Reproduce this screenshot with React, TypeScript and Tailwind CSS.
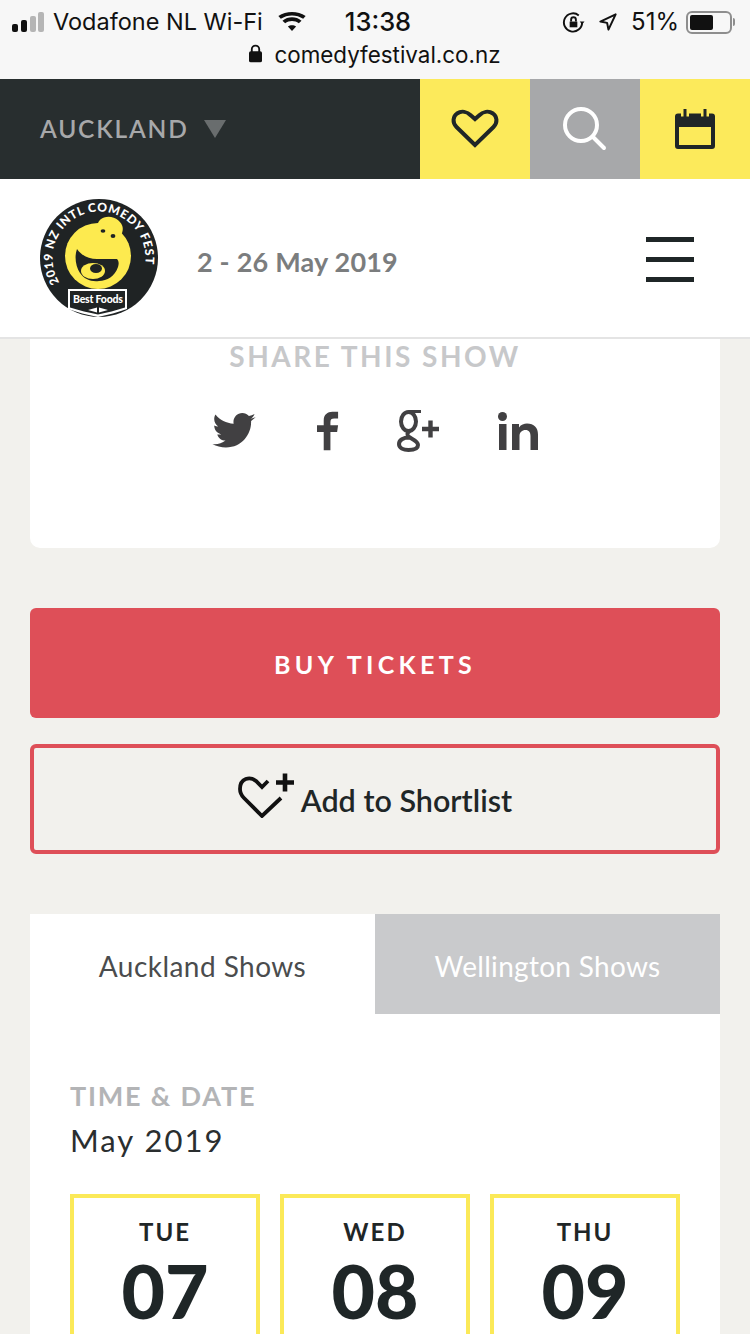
const sofia = { fontFamily: '"Lato", "Noto Sans", sans-serif' };

function Logo() {
  const yellow = "#fdea4f";
  const dark = "#1f2324";
  return (
    <svg width="120" height="120" viewBox="0 0 120 120" aria-hidden="true">
      <circle cx="60" cy="60" r="59" fill={dark} />
      <defs>
        <path id="logoArc" d="M 22.100 87 A 46.500 46.500 0 1 1 97.900 87" />
      </defs>
      <text fill="#fff" fontSize="12" fontWeight="900" letterSpacing="0.700" fontFamily="Lato, sans-serif">
        <textPath href="#logoArc" startOffset="3">2019 NZ INTL COMEDY FEST</textPath>
      </text>
      <circle cx="59" cy="58" r="33" fill={yellow} />
      <ellipse cx="71" cy="30" rx="13" ry="11" fill={yellow} transform="rotate(20 71 30)" />
      <ellipse cx="64" cy="33" rx="2.400" ry="1.800" fill={dark} />
      <ellipse cx="74" cy="38" rx="2.400" ry="2" fill={dark} />
      <path d="M38 51C43 58 50 61 58 61L78 61C80 63 80 66 79 69C76 78 68 83 60 83C52 84 45 81 41 75C37 69 35 59 38 51Z" fill={dark} />
      <ellipse cx="54" cy="73" rx="12" ry="8" fill={yellow} />
      <ellipse cx="57" cy="70.500" rx="6" ry="4.500" fill={dark} />
      <path d="M29 91h59v20c-9 3-19 6-29 8-11-2-21-5-30-8z" fill="#fff" />
      <path d="M31 93h55v16.500c-9 3-18 5-27 7-9-2-19-4-28-7z" fill={dark} />
      <text x="59" y="104.500" textAnchor="middle" fill="#fff" fontSize="10.500" fontWeight="900" fontFamily="Lato, sans-serif" textLength="50">Best Foods</text>
      <path d="M49 112l9-2.500v5zM69 112l-9-2.500v5z" fill="#fff" />
    </svg>
  );
}

function Twitter() {
  return (
    <svg width="44" height="36" viewBox="0 0 24 20" fill="#414042" aria-hidden="true">
      <path d="M24 2.400c-.9.400-1.800.600-2.800.800 1-.600 1.800-1.600 2.200-2.700-1 .600-2 1-3.100 1.200C19.300.700 18 0 16.600 0c-2.700 0-4.900 2.200-4.900 4.900 0 .400 0 .800.100 1.100C7.700 5.800 4.100 3.900 1.700.900c-.400.700-.700 1.600-.700 2.500 0 1.700.900 3.200 2.200 4.100-.800 0-1.600-.200-2.200-.600v.100c0 2.400 1.700 4.400 3.900 4.800-.400.100-.800.200-1.300.200-.300 0-.600 0-.900-.100.600 2 2.400 3.400 4.600 3.400-1.700 1.300-3.800 2.100-6.100 2.100-.400 0-.800 0-1.200-.100C2.200 18.300 4.800 19.100 7.500 19.100c9.100 0 14-7.500 14-14v-.600c1-.700 1.800-1.500 2.500-2.100z" />
    </svg>
  );
}

function GooglePlus() {
  return (
    <svg width="44" height="43" viewBox="0 0 44 43" aria-hidden="true" fill="none" stroke="#414042" strokeWidth="4">
      <path d="M24 2.500H12" strokeWidth="3" />
      <ellipse cx="11.500" cy="12.500" rx="7.500" ry="9.500" />
      <path d="M13 22c-3 1.500-3.500 4-1 6 3 2 9 4 9 8 0 3.500-4.500 5-9.500 5S2 39 2 35s4.500-6.500 10-6.500" />
      <path d="M25 20h17M33.500 11.500v17" strokeWidth="4.400" />
    </svg>
  );
}

function DateCard({ day, num }: { day: string; num: string }) {
  return (
    <div className="h-[180px] w-[190px] shrink-0 border-4 border-b-0 border-[#fbe958] pt-[19px] text-center text-[#1f2627]">
      <div className="text-[24px] leading-[30px] font-bold tracking-[2px]">{day}</div>
      <div className="mt-[5px] text-[75px] leading-[76px] font-black">{num}</div>
    </div>
  );
}

export default function App() {
  return (
    <div className="h-[1334px] w-[750px] overflow-hidden bg-[#f2f1ed]" style={sofia}>
      <div className="h-[79px] bg-[#f7f7f7] text-[#111]" style={{ fontFamily: 'Inter, sans-serif' }}>
        <div className="flex h-[42px] items-center pt-[2px] pl-[12px] text-[23.500px] leading-none">
          <svg width="34" height="20" viewBox="0 0 34 20" aria-hidden="true">
            <rect x="0" y="12" width="6" height="8" rx="2" fill="#111" />
            <rect x="9" y="8" width="6" height="12" rx="2" fill="#111" />
            <rect x="18" y="4" width="6" height="16" rx="2" fill="#b5b5b5" />
            <rect x="26" y="0" width="6" height="20" rx="2" fill="#b5b5b5" />
          </svg>
          <span className="ml-[7px] whitespace-nowrap">Vodafone NL Wi-Fi</span>
          <svg className="ml-[15px]" width="28" height="20" viewBox="0 0 30 22" aria-hidden="true">
            <path d="M15 21l-4.500-5c2.500-2 6.500-2 9 0zM7.500 12.500l-3-3c6-5 15-5 21 0l-3 3c-4.500-3.500-10.500-3.500-15 0zM2.700 7.500L0 4.500c8.500-6 21.500-6 30 0l-2.700 3C20 2.500 10 2.500 2.700 7.500z" fill="#111" />
          </svg>
          <span className="ml-[39px] text-[25.500px] font-medium">13:38</span>
          <div className="mr-[15px] ml-auto flex items-center">
            <svg className="mr-[-3px] ml-[-3px]" width="23" height="23" viewBox="0 0 24 24" fill="none" stroke="#111" strokeWidth="2" aria-hidden="true">
              <path d="M21 12a9.500 9.500 0 1 1-3.500-7.400" />
              <path d="M21 14l-2.500-3h5z" fill="#111" stroke="none" />
              <rect x="8" y="11" width="8" height="6" fill="#111" stroke="none" />
              <path d="M9.500 11V9a2.500 2.500 0 0 1 5 0v2" />
            </svg>
            <svg className="ml-[17px]" width="18" height="18" viewBox="0 0 20 20" fill="none" stroke="#111" strokeWidth="2.200" aria-hidden="true">
              <path d="M18.500 1.500 1.500 9.500l7.500 1.500 1.500 7.500z" strokeLinejoin="round" />
            </svg>
            <span className="ml-[14px] text-[24px]">51%</span>
            <div className="ml-[7px] flex h-[23px] w-[46px] items-center rounded-[6px] border-2 border-[#8e8e8e] p-[2px]">
              <div className="h-full w-[23px] rounded-[2px] bg-[#111]" />
            </div>
            <div className="ml-[1px] h-[8px] w-[2px] rounded-r bg-[#8e8e8e]" />
          </div>
        </div>
        <div className="flex h-[37px] items-start justify-center text-[22.400px] leading-[26px] text-[#111]">
          <svg className="mt-[2px] mr-[12px]" width="13" height="19" viewBox="0 0 14 19" aria-hidden="true">
            <rect x="0" y="7" width="14" height="12" rx="2" fill="#111" />
            <path d="M3 8V5a4 4 0 0 1 8 0v3" fill="none" stroke="#111" strokeWidth="2" />
          </svg>
          <span>comedyfestival.co.nz</span>
        </div>
      </div>

      <div className="flex h-[100px] bg-[#282e2f]">
        <div className="flex w-[420px] items-center pl-[40px]">
          <span className="text-[24.500px] font-semibold tracking-[1.800px] text-[#a7a8aa]">AUCKLAND</span>
          <svg className="ml-[15px]" width="22" height="18" viewBox="0 0 22 18" aria-hidden="true">
            <path d="M0 0h22L11 18z" fill="#696d6e" />
          </svg>
        </div>
        <div className="flex w-[110px] items-center justify-center bg-[#fcea5b]">
          <svg width="48" height="40" viewBox="0 0 48 40" fill="none" stroke="#1f2627" strokeWidth="4" aria-hidden="true">
            <path d="M24 36 5.500 18C1 13.500 2 7.500 6 4.500c4.500-3 10-2 14 2L24 10l4-3.500c4-4 9.500-5 14-2 4 3 5 9 .5 13.500z" />
          </svg>
        </div>
        <div className="flex w-[110px] items-center justify-center bg-[#a7a8aa]">
          <svg width="44" height="44" viewBox="0 0 44 44" fill="none" stroke="#fff" aria-hidden="true">
            <circle cx="18" cy="18" r="16" strokeWidth="4" />
            <path d="M30 30 41 41" strokeWidth="4" strokeLinecap="round" />
          </svg>
        </div>
        <div className="flex w-[110px] items-center justify-center bg-[#fcea5b]">
          <svg width="40" height="40" viewBox="0 0 40 40" aria-hidden="true">
            <path d="M3 4.500h34a3 3 0 0 1 3 3V37a3 3 0 0 1-3 3H3a3 3 0 0 1-3-3V7.500a3 3 0 0 1 3-3z" fill="#1f2627" />
            <rect x="4" y="18" width="32" height="18" fill="#fcea5b" />
            <rect x="6" y="4" width="8" height="3.500" fill="#fcea5b" />
            <rect x="26" y="4" width="8" height="3.500" fill="#fcea5b" />
            <rect x="8.500" y="0" width="3" height="8" fill="#1f2627" />
            <rect x="28.500" y="0" width="3" height="8" fill="#1f2627" />
          </svg>
        </div>
      </div>

      <div className="flex h-[160px] items-center border-b-2 border-[#e4e4e4] bg-white pl-[39px]">
        <Logo />
        <span className="ml-[38px] pt-[8px] text-[27px] font-bold tracking-[0.200px] text-[#7b7d7e]">2 - 26 May 2019</span>
        <div className="mt-[2px] mr-[56px] ml-auto flex flex-col gap-[15px]">
          <div className="h-[5px] w-[48px] bg-[#1f2627]" />
          <div className="h-[5px] w-[48px] bg-[#1f2627]" />
          <div className="h-[5px] w-[48px] bg-[#1f2627]" />
        </div>
      </div>

      <div className="px-[30px]">
        <div className="flex h-[209px] flex-col items-center rounded-b-[10px] bg-white">
          <div className="text-[28px] leading-[34px] font-bold tracking-[2.500px] text-[#c7c8ca]">SHARE THIS SHOW</div>
          <div className="mt-[36px] flex items-center gap-[57px]">
            <div className="mr-[4px] flex">
              <Twitter />
            </div>
            <svg width="23" height="40" viewBox="0 0 24 40" fill="#414042" aria-hidden="true">
              <path d="M7 40V21H0v-7h7V9c0-6 4-9 9-9h6v7h-4c-3 0-4 1-4 4v3h8l-1 7h-7v19z" />
            </svg>
            <GooglePlus />
            <svg width="40" height="38" viewBox="0 0 40 38" fill="#414042" aria-hidden="true">
              <circle cx="4.500" cy="4.500" r="4.500" />
              <rect x="1" y="12" width="7.500" height="26" />
              <path d="M14 12h7v3.500c2-3 5-4 8-4 7 0 11 4 11 11V38h-7.500V24c0-3.500-1.500-6-5-6s-6 2.500-6 6v14H14z" />
            </svg>
          </div>
        </div>

        <button className="mt-[60px] flex h-[110px] w-full items-center justify-center rounded-[6px] bg-[#de4f58] pt-[4px] text-[25px] font-bold tracking-[4.300px] text-white">
          BUY TICKETS
        </button>

        <button className="mt-[26px] flex h-[110px] w-full items-center justify-center rounded-[6px] border-4 border-[#de4f58] pt-[4px] text-[30.500px] font-semibold text-[#1f2627]">
          <svg className="mt-[-12px] mr-[6px]" width="57" height="46" viewBox="0 0 57 46" fill="none" stroke="#111" strokeWidth="3.800" aria-hidden="true">
            <path d="M30 9l-6 6-6-6C12 4 2 6 2 17c0 5 2 7 4 9l18 18 19-18" />
            <path d="M47 1.500v18M38 10.500h18" strokeWidth="4.600" />
          </svg>
          Add to Shortlist
        </button>

        <div className="mt-[60px] flex h-[100px]">
          <div className="flex w-[345px] items-center justify-center bg-white pt-[4px] text-[28px] tracking-[0.450px] text-[#4a4c4d]">Auckland Shows</div>
          <div className="flex w-[345px] items-center justify-center bg-[#c9cacc] pt-[4px] text-[28px] tracking-[0.300px] text-white">Wellington Shows</div>
        </div>

        <div className="h-[320px] bg-white px-[40px] pt-[64px]">
          <div className="text-[27px] leading-[36px] font-bold tracking-[1.800px] text-[#b3b4b6]">TIME &amp; DATE</div>
          <div className="mt-[7px] text-[31px] leading-[38px] tracking-[2px] text-[#2a2e2f]">May 2019</div>
          <div className="mt-[35px] flex gap-[20px]">
            <DateCard day="TUE" num="07" />
            <DateCard day="WED" num="08" />
            <DateCard day="THU" num="09" />
          </div>
        </div>
      </div>
    </div>
  );
}
